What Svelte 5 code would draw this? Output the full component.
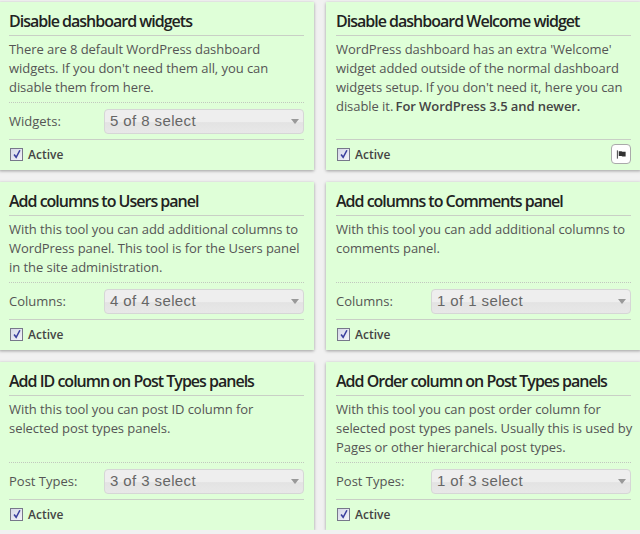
<script>
  const cards = [
    { title: "Disable dashboard widgets", text: "There are 8 default WordPress dashboard widgets. If you don't need them all, you can disable them from here.", label: "Widgets:", value: "5 of 8 select" },
    { title: "Disable dashboard Welcome widget", text: "WordPress dashboard has an extra 'Welcome' widget added outside of the normal dashboard widgets setup. If you don't need it, here you can disable it.", strong: "For WordPress 3.5 and newer.", flag: true },
    { title: "Add columns to Users panel", text: "With this tool you can add additional columns to WordPress panel. This tool is for the Users panel in the site administration.", label: "Columns:", value: "4 of 4 select" },
    { title: "Add columns to Comments panel", text: "With this tool you can add additional columns to comments panel.", label: "Columns:", value: "1 of 1 select" },
    { title: "Add ID column on Post Types panels", text: "With this tool you can post ID column for selected post types panels.", label: "Post Types:", value: "3 of 3 select" },
    { title: "Add Order column on Post Types panels", text: "With this tool you can post order column for selected post types panels. Usually this is used by Pages or other hierarchical post types.", label: "Post Types:", value: "1 of 3 select" }
  ];
</script>

<div class="grid">
  {#each cards as card}
    <section class="card">
      <h3>{card.title}</h3>
      <p class="desc">
        {card.text}
        {#if card.strong}<strong>{card.strong}</strong>{/if}
      </p>
      {#if card.label}
        <div class="option">
          <span class="label">{card.label}</span>
          <div class="select">
            <span>{card.value}</span>
            <i class="arrow"></i>
          </div>
        </div>
      {/if}
      <div class="footer">
        <label class="active">
          <span class="check">
            <svg viewBox="0 0 12 12" width="10" height="10"><path d="M2.5 6.5 5 10 9.5 1.5" fill="none" stroke="#3b3f9e" stroke-width="1.9"/></svg>
          </span>
          Active
        </label>
        {#if card.flag}
          <span class="flag">
            <svg viewBox="0 0 12 12" width="11" height="11"><path d="M1.5 1.5v9" stroke="#333" stroke-width="1" fill="none"/><path d="M3 2.5h3l1 .6h3.5v5H7l-1-.6H3z" fill="#333"/></svg>
          </span>
        {/if}
      </div>
    </section>
  {/each}
</div>

<style>
  :global(body) {
    background: #f1f1f1;
    overflow: hidden;
  }

  .grid {
    display: grid;
    grid-template-columns: 315px 315px;
    column-gap: 12px;
    row-gap: 12px;
    margin: 2px 0 0 -1px;
    width: 642px;
    font-family: "Open Sans", sans-serif;
    color: #555;
  }

  .card {
    box-sizing: border-box;
    height: 168px;
    padding: 0 10px;
    background: #dfffd8;
    box-shadow: 0 1px 3px rgba(0, 0, 0, 0.35);
    display: flex;
    flex-direction: column;
  }

  h3 {
    margin: 0;
    height: 33px;
    line-height: 38px;
    font-size: 16px;
    font-weight: 600;
    letter-spacing: -1px;
    color: #222;
    border-bottom: 1px solid #c9cfc6;
    white-space: nowrap;
  }

  .desc {
    flex: 1;
    margin: 0 -1.5px 0 0;
    padding-top: 4px;
    font-size: 13px;
    line-height: 19px;
    letter-spacing: -0.06px;
  }

  strong {
    font-weight: 600;
    color: #444;
    margin-left: -1px;
    letter-spacing: -0.08px;
  }

  .option {
    display: flex;
    align-items: center;
    height: 37px;
    box-sizing: border-box;
    border-top: 1px dotted #c2c8bf;
    font-size: 13px;
  }

  .label {
    width: 95px;
  }

  .select {
    flex: 1;
    position: relative;
    box-sizing: border-box;
    height: 25px;
    line-height: 22px;
    padding-left: 5px;
    border: 1px solid #d6d6d6;
    border-radius: 4px;
    background: linear-gradient(#eeeeee 0, #eeeeee 50%, #e3e3e3 55%, #e8e8e8 100%);
    font-family: "Liberation Sans", Arial, sans-serif;
    font-size: 15px;
    letter-spacing: 0.4px;
    color: #666;
  }

  .arrow {
    position: absolute;
    right: 4px;
    top: 9px;
    border-left: 4px solid transparent;
    border-right: 4px solid transparent;
    border-top: 5px solid #999;
  }

  .footer {
    display: flex;
    align-items: center;
    justify-content: space-between;
    height: 31px;
    padding-bottom: 2px;
    box-sizing: border-box;
    border-top: 1px solid #c9cfc6;
  }

  .active {
    display: flex;
    align-items: center;
    gap: 5px;
    margin-left: 1px;
    font-size: 12px;
    font-weight: 600;
    color: #444;
  }

  .check {
    box-sizing: border-box;
    width: 13px;
    height: 13px;
    display: flex;
    align-items: center;
    justify-content: center;
    border: 1px solid #77778a;
    background: linear-gradient(135deg, #d5d8e8, #f3f3f8);
  }

  .flag {
    box-sizing: border-box;
    width: 20px;
    height: 20px;
    display: flex;
    align-items: center;
    justify-content: center;
    border: 1px solid #aaa;
    border-radius: 4px;
    background: #fff;
  }
</style>
